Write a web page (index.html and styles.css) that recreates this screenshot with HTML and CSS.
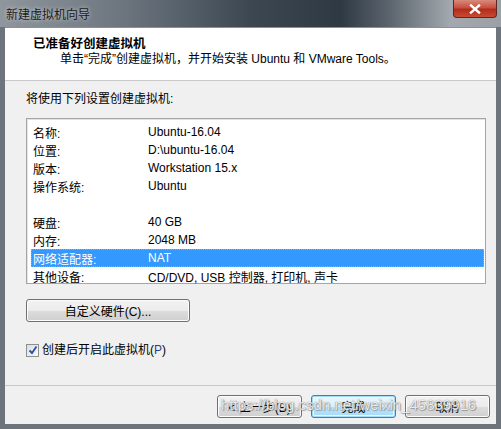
FILE: index.html
```html
<!DOCTYPE html>
<html lang="zh-CN">
<head>
<meta charset="utf-8">
<title>新建虚拟机向导</title>
<link rel="stylesheet" href="styles.css">
</head>
<body>
<div class="window">
  <div class="titlebar">
    <span class="title">新建虚拟机向导</span>
    <div class="close">
      <svg width="14" height="10" viewBox="0 0 14 10"><path d="M3 1.5 L11 8.5 M11 1.5 L3 8.5" stroke="#fff" stroke-width="2.4" stroke-linecap="square"/></svg>
    </div>
  </div>
  <div class="frame">
    <div class="client">
      <div class="header">
        <div class="h-title">已准备好创建虚拟机</div>
        <div class="h-sub">单击“完成”创建虚拟机，并开始安装 Ubuntu 和 VMware Tools。</div>
      </div>
      <div class="body">
        <div class="caption">将使用下列设置创建虚拟机:</div>
        <div class="list">
          <div class="row"><span class="k">名称:</span><span class="v">Ubuntu-16.04</span></div>
          <div class="row"><span class="k">位置:</span><span class="v">D:\ubuntu-16.04</span></div>
          <div class="row"><span class="k">版本:</span><span class="v">Workstation 15.x</span></div>
          <div class="row"><span class="k">操作系统:</span><span class="v">Ubuntu</span></div>
          <div class="row"></div>
          <div class="row"><span class="k">硬盘:</span><span class="v">40 GB</span></div>
          <div class="row"><span class="k">内存:</span><span class="v">2048 MB</span></div>
          <div class="row sel"><span class="k">网络适配器:</span><span class="v">NAT</span></div>
          <div class="row"><span class="k">其他设备:</span><span class="v">CD/DVD, USB 控制器, 打印机, 声卡</span></div>
        </div>
        <button class="btn hw">自定义硬件(C)...</button>
        <label class="check">
          <span class="box"><svg width="10" height="10" viewBox="0 0 10 10"><path d="M1.5 5.5 L4 8 L8.5 1.5" fill="none" stroke="#2a4fa8" stroke-width="1.8"/></svg></span>
          <span>创建后开启此虚拟机(<span class="ul">P</span>)</span>
        </label>
      </div>
      <div class="footer">
        <button class="btn">&lt; 上一步(B)</button>
        <button class="btn def">完成</button>
        <button class="btn">取消</button>
        <div class="watermark">https://blog.csdn.net/weixin_45839916</div>
      </div>
    </div>
  </div>
</div>
</body>
</html>
```
FILE: styles.css
```css
* { box-sizing: border-box; }
html, body { margin: 0; padding: 0; }
body {
  width: 501px;
  height: 429px;
  overflow: hidden;
  font-family: "Liberation Sans", "Noto Sans CJK SC", sans-serif;
  font-size: 12px;
  color: #000;
  background: #3c4248;
}
.window {
  width: 501px;
  height: 429px;
  display: flex;
  flex-direction: column;
}
.titlebar {
  position: relative;
  height: 27px;
  flex: none;
  display: flex;
  align-items: center;
  padding-left: 6px;
  background: linear-gradient(to right, #8f969d 0%, #6c757e 25%, #3c4752 50%, #2f3944 68%, #5d666f 78%, #a3a9ae 90%, #9aa0a5 100%);
}
.title {
  font-family: "Noto Sans CJK SC", sans-serif;
  font-size: 12px;
  color: #1b1b1b;
  text-shadow: 0 0 4px rgba(255,255,255,0.7);
  line-height: 16px;
  margin-top: 0px;
}
.close {
  position: absolute;
  right: 4px;
  top: 0;
  width: 44px;
  height: 18px;
  border: 1px solid #5a2a22;
  border-top: none;
  border-radius: 0 0 4px 4px;
  background: linear-gradient(to bottom, #d98a7c 0%, #c7503f 45%, #b02d1b 55%, #c94a32 100%);
  display: flex;
  align-items: center;
  justify-content: center;
}
.frame {
  flex: 1;
  display: flex;
  padding: 0 5px 5px 5px;
  background: linear-gradient(to right, #6b737b 0, #8e959c 4px, #6b737b 100%);
}
.frame { background: #6d747b; }
.client {
  flex: 1;
  display: flex;
  flex-direction: column;
  border-top: 1px solid #8a9096;
  background: #f0f0f0;
}
.header {
  height: 53px;
  flex: none;
  background: #fff;
  border-bottom: 1px solid #c8c8c8;
  padding: 6px 0 0 28px;
}
.h-title {
  font-family: "Noto Sans CJK SC", sans-serif;
  font-weight: bold;
  font-size: 12.5px;
  line-height: 17px;
}
.h-sub {
  font-family: "Liberation Sans", "Noto Sans CJK SC", sans-serif;
  font-size: 12px;
  line-height: 17px;
  padding-left: 27px;
}
.body {
  flex: 1;
  display: flex;
  flex-direction: column;
  align-items: flex-start;
  padding: 10px 10px 0 21px;
}
.caption {
  line-height: 16px;
}
.list {
  margin-top: 11px;
  width: 460px;
  height: 166px;
  background: #fff;
  border: 1px solid #a5a5a5;
  box-shadow: inset 1px 1px 0 #e3e3e3;
  padding: 4px 1px 0 4px;
}
.row {
  height: 18px;
  display: flex;
  align-items: center;
  padding-left: 2px;
}
.row .k { width: 115px; }
.row.sel {
  background: #3399ff;
  color: #fff;
  outline: 1px dotted #c8a060;
  outline-offset: -1px;
}
.btn {
  font-family: "Liberation Sans", "Noto Sans CJK SC", sans-serif;
  font-size: 12px;
  height: 23px;
  padding: 0;
  border: 1px solid #707070;
  border-radius: 3px;
  background: linear-gradient(to bottom, #f2f2f2 0%, #ebebeb 50%, #dddddd 51%, #cfcfcf 100%);
  box-shadow: inset 0 0 0 1px #fcfcfc;
  color: #000;
}
.hw {
  margin-top: 15px;
  width: 164px;
}
.check {
  margin-top: 20px;
  display: flex;
  align-items: center;
  gap: 3px;
  line-height: 16px;
}
.box {
  width: 13px;
  height: 13px;
  border: 1px solid #8e8f8f;
  background: linear-gradient(135deg, #dcdcdc, #fbfbfb);
  display: flex;
  align-items: center;
  justify-content: center;
}
.ul { color: #1d3f8f; }
.footer {
  position: relative;
  height: 39px;
  flex: none;
  border-top: 1px solid #c8c8c8;
  display: flex;
  justify-content: flex-end;
  align-items: flex-start;
  gap: 9px;
  padding: 9px 6px 0 0;
}
.footer .btn { width: 85px; }
.btn.def {
  border-color: #3c7fb1;
  box-shadow: inset 0 0 0 1px #a5dcf5, inset 0 0 0 2px #eaf6fd;
  background: linear-gradient(to bottom, #eaf6fd 0%, #d9f0fc 50%, #bee6fd 51%, #a7d9f5 100%);
}
.watermark {
  position: absolute;
  left: 216px;
  top: 10px;
  font-family: "Liberation Sans", sans-serif;
  font-size: 15px;
  color: rgba(255,255,255,0.85);
  text-shadow: 0 0 1px rgba(90,90,90,0.9), 1px 1px 1px rgba(120,120,120,0.6);
  pointer-events: none;
  white-space: nowrap;
}
```
